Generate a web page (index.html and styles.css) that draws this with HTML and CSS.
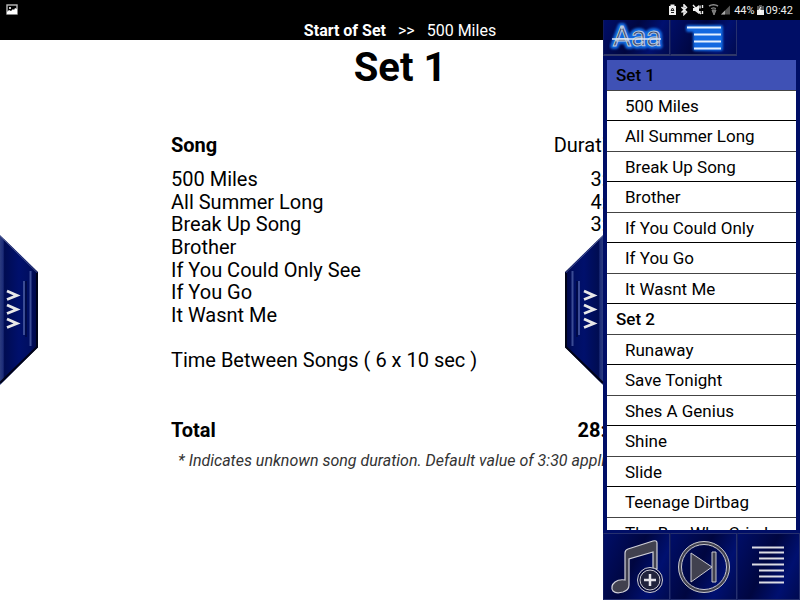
FILE: index.html
```html
<!DOCTYPE html>
<html lang="en">
<head>
  <meta charset="UTF-8">
  <meta name="viewport" content="width=device-width, initial-scale=1.0">
  <title>Set List</title>
  <link rel="stylesheet" href="styles.css">
</head>
<body>
  <div class="status-bar">
    <svg class="status-picture" width="12" height="12" viewBox="0 0 12 12">
      <rect x="1" y="1" width="10" height="9" fill="#000" stroke="#bbb" stroke-width="1.4"/>
      <rect x="3" y="3" width="2" height="2" fill="#ccc"/>
      <path d="M1 10V8l2-2 2 1 2-2 1 1 1-2 2 1v5z" fill="#fff"/>
    </svg>
    <div class="status-right">
      <svg width="64" height="12" viewBox="0 0 64 12">
        <path d="M1 2h1.500V0.500h4V2H8v9H1z" fill="#eee"/>
        <path d="M3 6.500l1.500-2.500 1.500 2.500zM3 8.500h3" fill="none" stroke="#222" stroke-width="1"/>
        <path d="M13.500 3l5 5-2.500 2.500V.8L18.500 3.500l-5 5" fill="none" stroke="#eee" stroke-width="1.500"/>
        <path d="M25 4h2l4-3v9l-4-3h-2z" fill="#eee"/>
        <path d="M25 1l8 9M32 1.500v3M32 7v3M34.500 1v3M34.500 7v3" stroke="#eee" stroke-width="1.400"/>
        <path d="M41 2q4.500-2.500 9 0" fill="none" stroke="#888" stroke-width="1.500"/>
        <path d="M43 4.500q2.500-1.500 5 0M44 6h4l-2 5z" fill="#777" stroke="#888"/>
        <path d="M53 10.500L62 1.500v9z" fill="#555"/>
        <path d="M53 10.500L57 6.500v4z" fill="#aaa"/>
      </svg>
      <span>44%</span>
      <svg width="7" height="12" viewBox="0 0 7 12">
        <path d="M0 2h2V1h3v1h2v4H0z" fill="#555"/>
        <path d="M0 6h7v5H0z" fill="#eee"/>
        <path d="M4 3L2 6h2L3 9" fill="none" stroke="#fff"/>
      </svg>
      <span>09:42</span>
    </div>
  </div>

  <header class="song-bar">
    <strong>Start of Set</strong>
    <span>&gt;&gt;</span>
    <span>500 Miles</span>
  </header>

  <main class="page">
    <h1>Set 1</h1>
    <table class="songs">
      <thead>
        <tr><th>Song</th><td>Duration</td></tr>
      </thead>
      <tbody>
        <tr><td>500 Miles</td><td>3:30</td></tr>
        <tr><td>All Summer Long</td><td>4:30</td></tr>
        <tr><td>Break Up Song</td><td>3:30</td></tr>
        <tr><td>Brother</td><td></td></tr>
        <tr><td>If You Could Only See</td><td></td></tr>
        <tr><td>If You Go</td><td></td></tr>
        <tr><td>It Wasnt Me</td><td></td></tr>
        <tr><td></td><td></td></tr>
        <tr><td>Time Between Songs ( 6 x 10 sec )</td><td></td></tr>
      </tbody>
      <tfoot>
        <tr><th>Total</th><th>28:00</th></tr>
      </tfoot>
    </table>
    <p class="note">* Indicates unknown song duration. Default value of 3:30 applied</p>
  </main>

  <button class="tab tab-left" aria-label="Open left panel">
    <svg width="38" height="150" viewBox="0 0 38 150">
      <defs>
        <linearGradient id="tabFill" x1="0" y1="0" x2="1" y2="0">
          <stop offset="0" stop-color="#2c3c80"/>
          <stop offset=".08" stop-color="#1c2c78"/>
          <stop offset=".12" stop-color="#000c52"/>
          <stop offset=".5" stop-color="#00106c"/>
          <stop offset=".8" stop-color="#000e60"/>
          <stop offset="1" stop-color="#000640"/>
        </linearGradient>
      </defs>
      <path d="M0 0L38 37v75L0 150z" fill="url(#tabFill)"/>
      <path d="M0 1L37 37.500" stroke="#46528c" fill="none"/>
      <path d="M37 38v74L0 148" stroke="#000318" stroke-width="2" fill="none"/>
      <path d="M24 46v54M30.500 36v75" stroke="#3a4b94" stroke-width="2"/>
      <path d="M26 46v56" stroke="#00062e"/>
      <path d="M7 56l10 4.500-10 4M7 70l10 4.500-10 4M7 84l10 4.500-10 4" fill="none" stroke="#e8e8e8" stroke-width="2.800"/>
    </svg>
  </button>
  <button class="tab tab-right" aria-label="Close right panel">
    <svg width="38" height="150" viewBox="0 0 38 150">
      <g transform="translate(38 0) scale(-1 1)">
        <path d="M0 0L38 37v75L0 150z" fill="url(#tabFill)"/>
        <path d="M0 1L37 37.500" stroke="#46528c" fill="none"/>
        <path d="M37 38v74L0 148" stroke="#000318" stroke-width="2" fill="none"/>
        <path d="M24 46v54M30.500 36v75" stroke="#3a4b94" stroke-width="2"/>
        <path d="M26 46v56" stroke="#00062e"/>
      </g>
      <path d="M19 56l10 4.500-10 4M19 70l10 4.500-10 4M19 84l10 4.500-10 4" fill="none" stroke="#e8e8e8" stroke-width="2.800"/>
    </svg>
  </button>

  <aside class="drawer">
    <div class="tools tools-top">
      <button class="tool" aria-label="Text style">
        <svg width="56" height="32" viewBox="0 0 56 32">
          <g font-family="Roboto, sans-serif" font-size="28" text-anchor="middle">
            <text class="glow" x="28" y="25" fill="none" stroke="#1268e0" stroke-width="6" stroke-linejoin="round">Aaa</text>
            <text x="28" y="25" fill="#444c66" stroke="#b8c8e0" stroke-width="1">Aaa</text>
          </g>
          <path d="M3 18h49" stroke="#dce8f8" stroke-width="1.500"/>
        </svg>
      </button>
      <button class="tool" aria-label="Song list">
        <svg width="46" height="32" viewBox="0 0 46 32">
          <path class="glow" d="M7 6h33v22H14V9H7z" fill="#1268e0" stroke="#1268e0" stroke-width="4" stroke-linejoin="round"/>
          <path d="M6 6.500h34M13 13.500h27M13 20.500h27M13 27.500h27" stroke="#e4f0ff" stroke-width="2"/>
        </svg>
      </button>
    </div>
    <ul class="song-list">
      <li class="set current">Set 1</li>
      <li>500 Miles</li>
      <li>All Summer Long</li>
      <li>Break Up Song</li>
      <li>Brother</li>
      <li>If You Could Only</li>
      <li>If You Go</li>
      <li>It Wasnt Me</li>
      <li class="set">Set 2</li>
      <li>Runaway</li>
      <li>Save Tonight</li>
      <li>Shes A Genius</li>
      <li>Shine</li>
      <li>Slide</li>
      <li>Teenage Dirtbag</li>
      <li>The Boy Who Cried</li>
    </ul>
    <div class="tools tools-bottom">
      <button class="tool" aria-label="Add song">
        <svg width="60" height="60" viewBox="0 0 60 60">
          <path d="M18 16q0-3 3-4l25-8q4-1 4 2v26h-4V15l-24 7v26q0 5-6 7-7 2-10-1-3-5 2-9 4-3 10-2z" fill="#41414f" stroke="#d0d0d8" stroke-width="1.200"/>
          <circle cx="43" cy="43" r="12.500" fill="#04093c" stroke="#d0d0d8"/>
          <circle cx="43" cy="43" r="10" fill="#20233c" stroke="#d0d0d8"/>
          <path d="M43 37v12M37 43h12" stroke="#e4e4ea" stroke-width="2.500"/>
        </svg>
      </button>
      <button class="tool" aria-label="Next song">
        <svg width="60" height="60" viewBox="0 0 60 60">
          <circle cx="30" cy="30" r="24" fill="none" stroke="#41414f" stroke-width="3"/>
          <circle cx="30" cy="30" r="25.500" fill="none" stroke="#c8c8d0"/>
          <circle cx="30" cy="30" r="22.500" fill="none" stroke="#c8c8d0"/>
          <path d="M17 16l21 14-21 15zM38 15h4v30h-4z" fill="#41414f" stroke="#c8c8d0"/>
        </svg>
      </button>
      <button class="tool" aria-label="Set list">
        <svg width="60" height="60" viewBox="0 0 60 60">
          <path d="M13 10.500h32M20 15.500h25M20 21.500h25M13 27.500h32M20 33.500h25M20 39.500h25M20 45.500h25" stroke="#dcdce4" stroke-width="1.800"/>
        </svg>
      </button>
    </div>
  </aside>
</body>
</html>
```
FILE: styles.css
```css
* {
  box-sizing: border-box;
}
body {
  position: relative;
  display: flex;
  flex-direction: column;
  height: 100vh;
  margin: 0;
  overflow: hidden;
  background-color: #fff;
  color: #000;
  font-family: Roboto, sans-serif;
  font-size: 20px;
}
button {
  padding: 0;
  border: none;
  background: none;
  cursor: pointer;
}
svg {
  display: block;
}

/* Top bars */
.status-bar {
  display: flex;
  justify-content: space-between;
  align-items: center;
  height: 20px;
  padding: 0 7px 0 6px;
  background-color: #000;
  color: #eee;
  font-size: 11px;
}
.status-right {
  display: flex;
  align-items: center;
  gap: 2px;
}
.song-bar {
  display: flex;
  justify-content: center;
  gap: 12px;
  height: 20px;
  background-color: #000;
  color: #fff;
  font-size: 16px;
  line-height: 22px;
}

/* Set summary */
.page {
  display: flex;
  flex-direction: column;
  align-items: center;
}
h1 {
  margin: 0 0 38px;
  font-size: 40px;
  line-height: 56px;
}
.songs {
  width: 458px;
  border-collapse: collapse;
}
.songs th,
.songs td {
  height: 23px;
  padding: 0;
  line-height: 22px;
  text-align: left;
}
.songs tr :last-child {
  text-align: right;
}
.songs thead tr > * {
  height: 33px;
  padding-bottom: 11px;
}
.songs tbody tr:nth-child(3n) td {
  height: 22px;
}
.songs tfoot th {
  padding-top: 48px;
}
.note {
  margin: 9px 0 0;
  color: #333;
  font-size: 16px;
  font-style: italic;
  line-height: 22px;
}

/* Pull tabs */
.tab {
  position: absolute;
  top: 235px;
}
.tab-left {
  left: 0;
}
.tab-right {
  right: 197px;
}

/* Song drawer */
.drawer {
  position: absolute;
  top: 20px;
  right: 0;
  bottom: 0;
  display: flex;
  flex-direction: column;
  width: 197px;
  background-color: #000e66;
}
.tools {
  display: grid;
  grid-template-columns: 67fr 67fr 63fr;
}
.tools-top {
  height: 36px;
  margin-bottom: 4px;
}
.tools-bottom {
  height: 67px;
  margin-top: 3px;
}
.tool {
  display: flex;
  justify-content: center;
  align-items: center;
  border: 1px solid #26306e;
  border-left-color: #101a5c;
  background: linear-gradient(115deg, #000e68, #000640 45%, #001070 75%, #000a50);
}
.tools-top .tool {
  border-top: none;
  border-bottom: 2px solid #303868;
}
.glow {
  filter: blur(1px);
}
.song-list {
  flex: 1;
  min-height: 0;
  margin: 0 4px;
  padding: 0;
  overflow: hidden;
  background-color: #fff;
  font-size: 17px;
  list-style: none;
}
.song-list li {
  height: 31px;
  padding-left: 18px;
  border-bottom: 1px solid #444;
  line-height: 31px;
  white-space: nowrap;
}
.song-list li:nth-child(even) {
  height: 30px;
  border-bottom-color: #000;
}
.song-list .set {
  padding-left: 9px;
  font-weight: 500;
}
.song-list .current {
  background-color: #3f51b5;
}
```
